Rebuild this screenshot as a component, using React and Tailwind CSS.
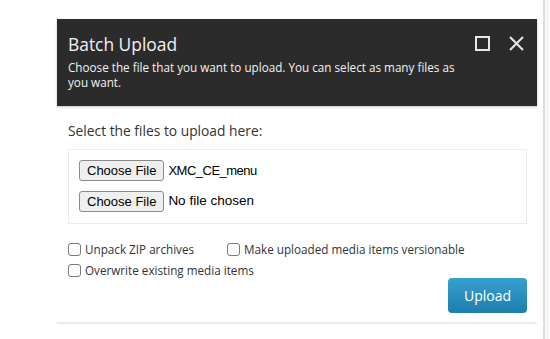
import React from "react";

const Box = () => (
  <span className="inline-block w-[13px] h-[13px] rounded-[3px] border border-[#7a7a7a] bg-white shrink-0" />
);

const FileBtn = ({ label, narrow }) => (
  <div className="flex items-center h-[21px]">
    <span className="h-[21px] px-[7px] flex items-center rounded-[3px] border border-[#8a8a8a] bg-[#efefef] text-[13px] text-black font-['Liberation_Sans',Arial,sans-serif]">
      Choose File
    </span>
    <span
      className={
        narrow
          ? "ml-[4px] text-[13px] tracking-[-0.5px] text-black font-['Liberation_Sans',Arial,sans-serif]"
          : "ml-[4px] text-[13.5px] text-black font-['Liberation_Sans',Arial,sans-serif]"
      }
    >
      {label}
    </span>
  </div>
);

export default function App() {
  return (
    <div className="flex w-[550px] h-[339px] bg-[#f6f6f6] font-['Open_Sans',sans-serif] overflow-hidden">
      <div className="w-[545px] h-full bg-white border-r-2 border-[#dedede] pt-[19px] pl-[57px]">
        <div className="w-[480px]">
          <div className="bg-[#2b2b2b] pt-[13px] pb-[16px] pl-[11px] pr-[13px] text-[#f2f2f2] shadow-[0_1px_2px_rgba(0,0,0,0.25)]">
            <div className="flex items-start justify-between">
              <div className="text-[17.4px] leading-[24px]">Batch Upload</div>
              <div className="flex items-center gap-[19px] mt-[4px]">
                <svg width="15" height="15" viewBox="0 0 15 15">
                  <rect x="1" y="1" width="13" height="13" fill="none" stroke="#e8e8e8" strokeWidth="2" />
                </svg>
                <svg width="15" height="15" viewBox="0 0 15 15">
                  <path d="M1 1 L14 14 M14 1 L1 14" stroke="#e8e8e8" strokeWidth="2" />
                </svg>
              </div>
            </div>
            <div className="mt-[4px] text-[11.7px] leading-[15px] w-[400px]">
              Choose the file that you want to upload. You can select as many files as you want.
            </div>
          </div>
          <div className="px-[11px] pr-[10px]">
            <div className="mt-[15px] text-[13.8px] leading-[20px] text-[#333]">Select the files to upload here:</div>
            <div className="mt-[8px] border border-[#ececec] pt-[10px] pb-[11px] pl-[10px] flex flex-col gap-[10px]">
              <FileBtn label="XMC_CE_menu" narrow />
              <FileBtn label="No file chosen" />
            </div>
            <div className="mt-[15px] text-[11.7px] leading-[21px] text-[#333]">
              <div className="flex items-center">
                <label className="flex items-center gap-[4px] w-[159px]">
                  <Box />
                  <span>Unpack ZIP archives</span>
                </label>
                <label className="flex items-center gap-[4px]">
                  <Box />
                  <span>Make uploaded media items versionable</span>
                </label>
              </div>
              <label className="flex items-center gap-[4px]">
                <Box />
                <span>Overwrite existing media items</span>
              </label>
            </div>
            <div className="flex justify-end mt-[-3px]">
              <button className="w-[79px] h-[35px] rounded-[4px] bg-gradient-to-b from-[#36a0d0] to-[#1f7eab] text-white text-[14px]">
                Upload
              </button>
            </div>
          </div>
          <div className="mt-[9px] h-[2px] bg-[#ececec]" />
        </div>
      </div>
    </div>
  );
}
